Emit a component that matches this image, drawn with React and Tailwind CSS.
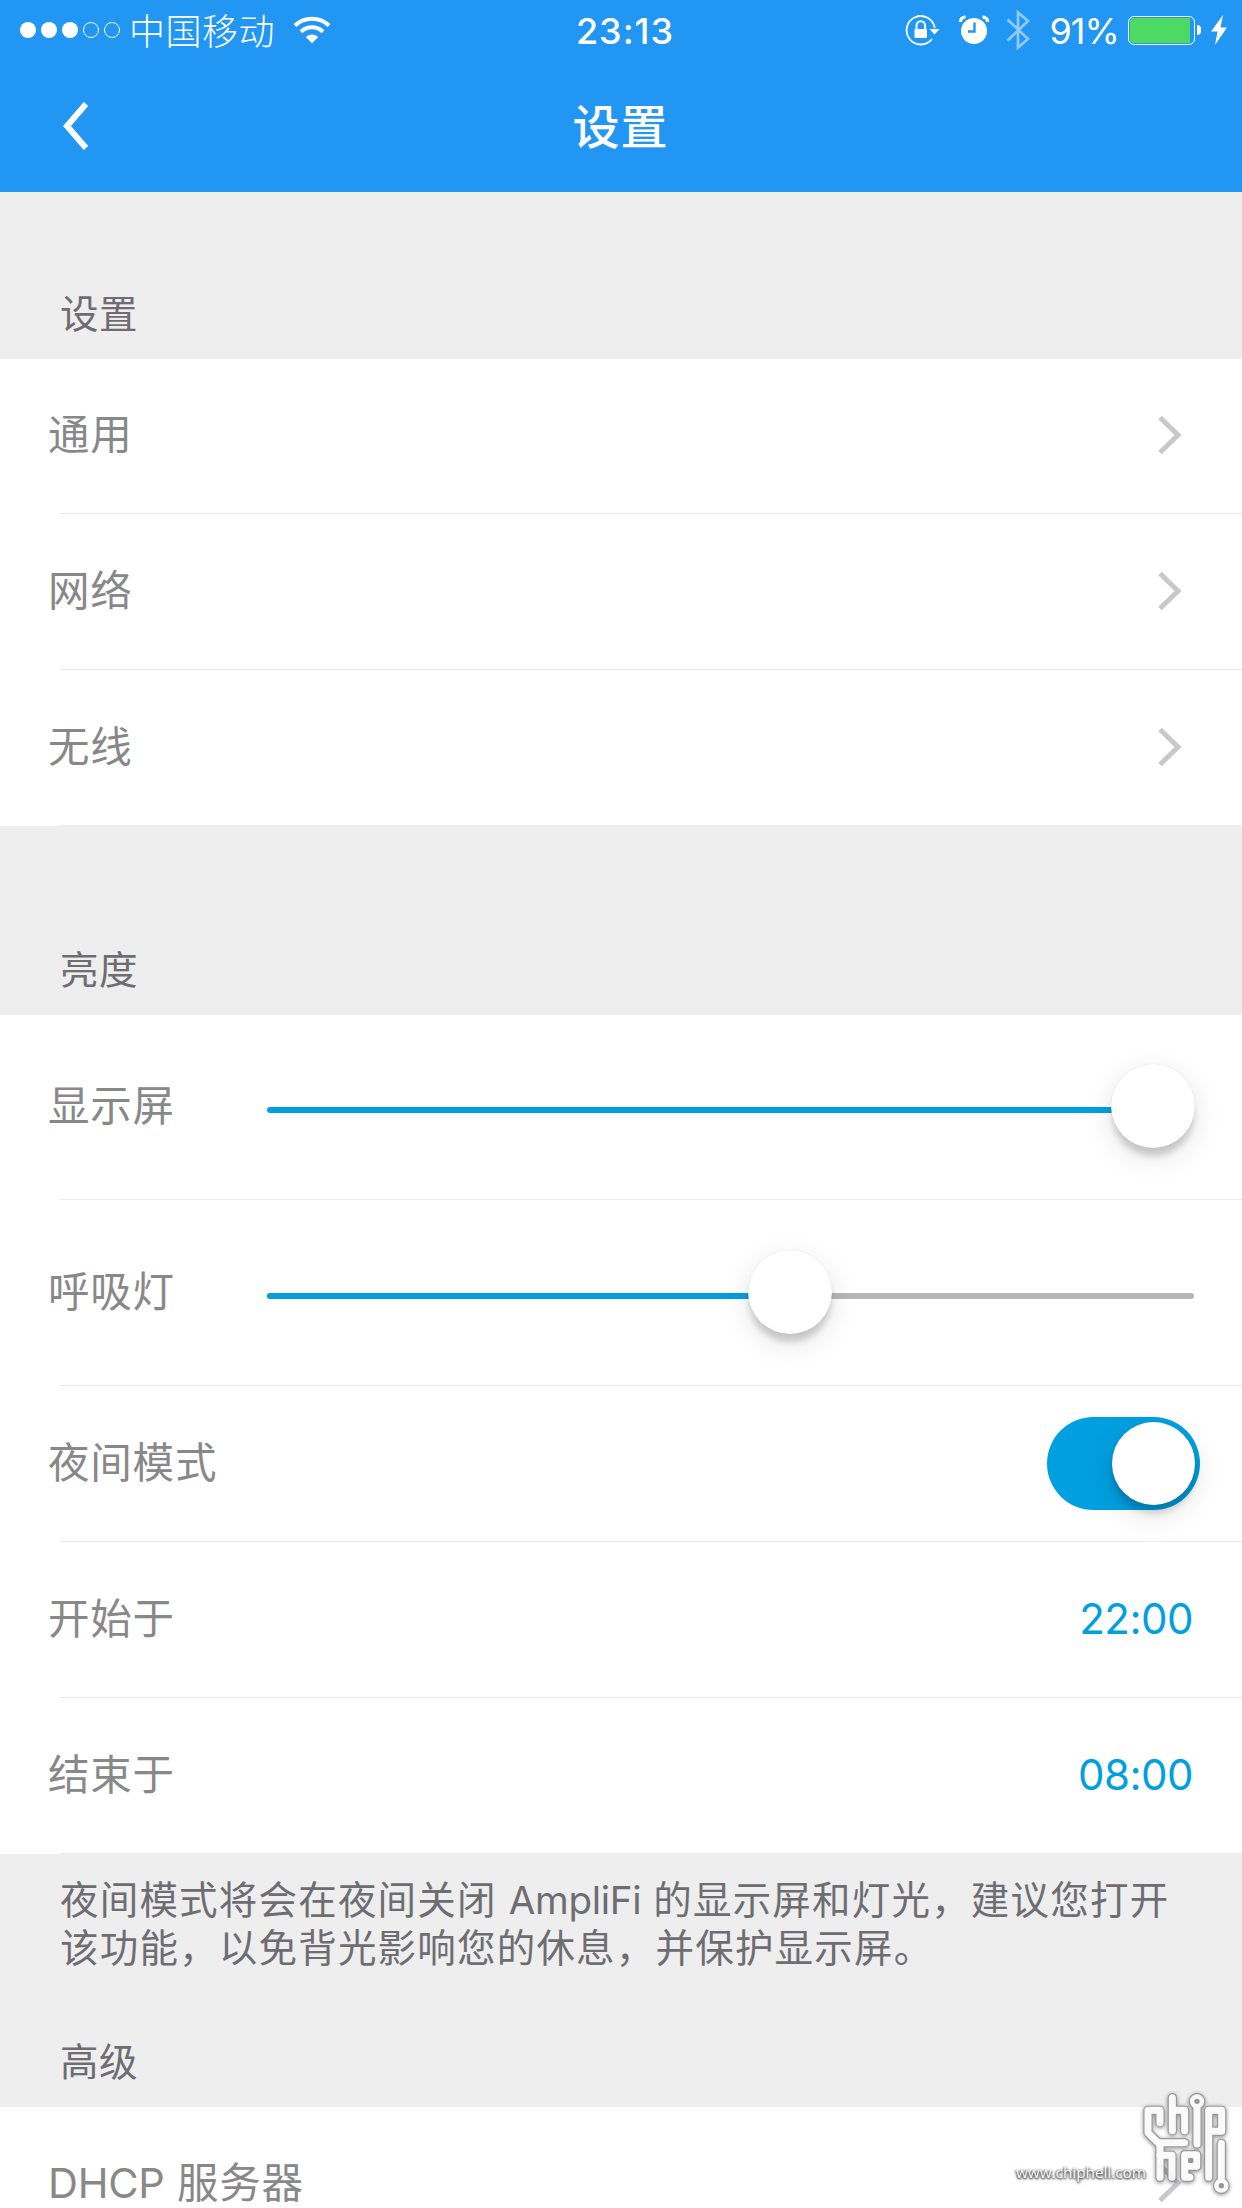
const sections = {
  general: ['通用', '网络', '无线'],
  schedule: [
    { label: '开始于', value: '22:00' },
    { label: '结束于', value: '08:00' },
  ],
};

function StatusBar() {
  return (
    <div className="flex h-[60px] items-center text-white">
      <div className="flex flex-1 items-center pl-5">
        <div className="flex gap-[5px]">
          {[1, 2, 3].map((n) => (
            <span key={n} className="size-4 rounded-full bg-white" />
          ))}
          {[4, 5].map((n) => (
            <span key={n} className="size-4 rounded-full border border-white" />
          ))}
        </div>
        <span className="ml-[9px] pt-[3px] text-[36px] leading-[60px] font-light tracking-[0.5px]">中国移动</span>
        <svg className="ml-[18px]" width="38" height="28" viewBox="0 0 38 28" fill="none" stroke="white">
          <path d="M2 9.5a24.5 24.5 0 0 1 34 0" strokeWidth="4" />
          <path d="M8 15.7a16 16 0 0 1 22 0" strokeWidth="4" />
          <path d="M12.7 21a9.5 9.5 0 0 1 12.6 0L19 27.3z" fill="white" stroke="none" />
        </svg>
      </div>
      <div className="pt-[2px] pl-[3px] text-[36px] leading-[60px] font-medium tracking-[1px]">23:13</div>
      <div className="flex flex-1 items-center justify-end pr-[15px]">
        <svg width="36" height="32" viewBox="0 0 36 32" fill="none">
          <path d="M29.8 14A14.2 14.2 0 1 0 27 25" stroke="white" strokeWidth="1.8" />
          <path d="M24.5 15h10l-5 5.5z" fill="white" />
          <rect x="9.5" y="15" width="12.5" height="9" rx="1" fill="white" />
          <path d="M11.5 15v-3.5a4.3 4.3 0 0 1 8.6 0V15" stroke="white" strokeWidth="2" />
        </svg>
        <svg className="ml-[18px]" width="30" height="30" viewBox="0 0 30 30" fill="none">
          <circle cx="15" cy="16" r="13" fill="white" />
          <path d="M1.5 7Q1.5 2 6.5 2.2M28.5 7Q28.5 2 23.5 2.2" stroke="white" strokeWidth="3.2" />
          <path d="M15.5 7.5v9H9" stroke="#2196f3" strokeWidth="2.4" />
        </svg>
        <svg className="ml-[17px] opacity-50" width="25" height="42" viewBox="0 0 25 42" fill="none" stroke="white" strokeWidth="2.7">
          <path d="M1.5 10.5 22 30 12 38.5V3.5L22 12 1.5 31.5" />
        </svg>
        <span className="ml-[18px] pt-[2px] text-[36px] leading-[60px] tracking-[-0.9px]">91%</span>
        <div className="ml-[9px] flex h-[29px] w-[67px] rounded-[6px] border border-white p-px">
          <div className="w-[60px] rounded-l-[4px] bg-[#4cd964]" />
        </div>
        <div className="ml-[2px] h-[10px] w-[4px] rounded-r-full bg-white" />
        <svg className="ml-[10px]" width="16" height="30" viewBox="0 0 16 30" fill="white">
          <path d="M12 0 0 16.5h6.5L4 30 16 12.5H9.5z" />
        </svg>
      </div>
    </div>
  );
}

function Header() {
  return (
    <header className="h-[192px] bg-[#2196f3]">
      <StatusBar />
      <div className="flex h-[132px] items-center pl-[63px] text-white">
        <svg width="26" height="50" viewBox="0 0 26 50" fill="none" stroke="white" strokeWidth="6">
          <path d="M23 3 4 25 23 47" />
        </svg>
        <h1 className="flex-1 pt-[2px] pr-[90px] text-center text-[47px] leading-[60px] font-medium tracking-[1px]">设置</h1>
      </div>
    </header>
  );
}

function SectionTitle({ children, className }) {
  return (
    <h2 className={`flex flex-col justify-end bg-[#eeeeee] pb-[19px] pl-[60px] text-[38.5px] leading-[52px] tracking-[0.5px] text-[#6d6d72] ${className}`}>
      {children}
    </h2>
  );
}

function Chevron() {
  return (
    <svg className="mr-[60px]" width="24" height="40" viewBox="0 0 24 40" fill="none" stroke="#c7c7cc" strokeWidth="5">
      <path d="M2 2.5 20 20 2 37.5" />
    </svg>
  );
}

// the first row of a section sits a pixel higher than the ones below it
function Row({ label, first, className = 'h-[156px]', children }) {
  return (
    <div className={`flex flex-col bg-white ${className}`}>
      <div className={`flex flex-1 items-center justify-between pl-[48px] ${first ? 'pb-[3px]' : 'pb-px'}`}>
        <span className="text-[41.5px] leading-[60px] tracking-[0.8px] whitespace-nowrap text-[#888888]">{label}</span>
        {children}
      </div>
      <div className="ml-[60px] h-px bg-[#ebebeb]" />
    </div>
  );
}

function Slider({ percent }) {
  return (
    <div className="relative mr-12 h-[84px] w-[927px]">
      <div className="mt-[43px] h-[6px] overflow-hidden rounded-full bg-[#b7b7b7]">
        <div className="h-full bg-[#009fe0]" style={{ width: `${percent}%` }} />
      </div>
      <div
        className="absolute top-0 size-[84px] rounded-full bg-white shadow-[0_0_1px_rgba(0,0,0,0.15),0_9px_6px_-1px_rgba(0,0,0,0.16),0_9px_30px_rgba(0,0,0,0.11)]"
        style={{ left: `calc((100% - 83px) * ${percent / 100})` }}
      />
    </div>
  );
}

function Toggle() {
  return (
    <div className="mr-[42px] flex h-[93px] w-[153px] items-center justify-end rounded-full bg-[#009fe0] pr-[5px]">
      <div className="size-[83px] rounded-full bg-white shadow-[0_8px_7px_rgba(0,0,0,0.16),0_9px_30px_rgba(0,0,0,0.12)]" />
    </div>
  );
}

function Traces() {
  return (
    <>
      <path d="M540 188V151H504V218L540 254V352" />
      <path d="M540 248H614" />
      <path d="M577 113V212M577 151H614V212" />
      <path d="M651 135V252" />
      <circle cx="651" cy="124" r="11" />
      <path d="M686 352V151H725V214H696" />
      <path d="M540 286H576V352" />
      <path d="M630 352H614V284H650V319H622" />
      <path d="M724 250V366" />
      <circle cx="724" cy="377" r="11" />
    </>
  );
}

function Watermark() {
  return (
    <div className="absolute right-0 bottom-0 h-[148px] w-[262px]">
      <span className="absolute top-[98px] left-[36px] text-[15.3px] leading-[28px] font-medium text-white [font-family:'Open_Sans','Noto_Sans',sans-serif] [text-shadow:0_1px_2px_#444,1px_1px_3px_#555,-1px_0_2px_#777]">
        www.chiphell.com
      </span>
      <svg
        className="absolute inset-0 opacity-90 drop-shadow-[0_1px_2px_rgba(0,0,0,0.5)]"
        width="262"
        height="148"
        viewBox="0 0 786 444"
        fill="none"
        strokeLinejoin="round"
        strokeLinecap="round"
      >
        <g stroke="#8f8f8f" strokeWidth="28">
          <Traces />
        </g>
        <g stroke="#fafafa" strokeWidth="21">
          <Traces />
        </g>
        <g fill="#8c8c8c">
          <circle cx="651" cy="124" r="8" />
          <circle cx="724" cy="377" r="8" />
          <circle cx="632" cy="301" r="8" />
        </g>
      </svg>
    </div>
  );
}

export default function App() {
  return (
    <div
      lang="zh-CN"
      className="relative h-[2208px] w-[1242px] overflow-hidden bg-[#eeeeee] [font-family:Inter,'Noto_Sans_CJK_SC',sans-serif]"
    >
      <Header />

      <SectionTitle className="h-[167px]">设置</SectionTitle>
      {sections.general.map((label, i) => (
        <Row key={label} label={label} first={i === 0} className={i === 0 ? 'h-[155px]' : 'h-[156px]'}>
          <Chevron />
        </Row>
      ))}

      <SectionTitle className="h-[189px]">亮度</SectionTitle>
      <Row label="显示屏" first className="h-[185px]">
        <Slider percent={100} />
      </Row>
      <Row label="呼吸灯" className="h-[186px]">
        <Slider percent={57} />
      </Row>
      <Row label="夜间模式">
        <Toggle />
      </Row>
      {sections.schedule.map(({ label, value }) => (
        <Row key={label} label={label}>
          <span className="mr-[49px] text-[42px] leading-[60px] tracking-[-0.5px] text-[#009fe0]">{value}</span>
        </Row>
      ))}

      <p className="h-[136px] pt-[22px] pl-[60px] text-[38.5px] leading-[48px] tracking-[1.2px] whitespace-nowrap text-[#6d6d72]">
        夜间模式将会在夜间关闭 <span className="tracking-[-0.3px]">AmpliFi</span> 的显示屏和灯光，建议您打开
        <br />
        该功能，以免背光影响您的休息，并保护显示屏。
      </p>
      <SectionTitle className="h-[117px]">高级</SectionTitle>
      <Row label={<><span className="tracking-[-0.3px]">DHCP</span> 服务器</>} first>
        <Chevron />
      </Row>

      <Watermark />
    </div>
  );
}
